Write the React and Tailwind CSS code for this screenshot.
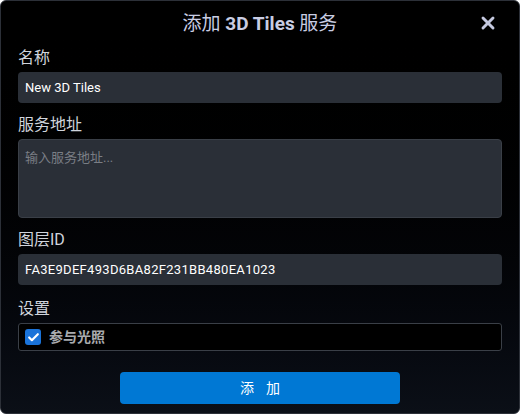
import { X, Check } from "lucide-react";

export default function App() {
  return (
    <div
      className="h-[414px] w-[520px] bg-white"
      style={{ fontFamily: 'Roboto, "Noto Sans CJK SC", sans-serif' }}
    >
      <div className="flex h-full flex-col rounded-md border border-[#2c3038] bg-gradient-to-b from-[#000000] to-[#0b0f17] px-[17px]">
        <div className="relative flex h-[46px] items-center justify-center">
          <h1 className="text-[19px] text-[#c9cde3]">
            添加 <span className="font-bold">3D Tiles</span> 服务
          </h1>
          <button className="absolute right-[4px] top-[12px] text-[#c5c9e0]">
            <X size={20} strokeWidth={3.5} />
          </button>
        </div>

        <Label>名称</Label>
        <input
          defaultValue="New 3D Tiles"
          className="h-[31px] w-full rounded-[4px] bg-[#2a2f37] px-[7px] text-[13px] text-white outline-none"
        />

        <Label className="mt-[11px]">服务地址</Label>
        <textarea
          placeholder="输入服务地址..."
          className="h-[79px] w-full resize-none rounded-[4px] border border-[#3a3f47] bg-[#2a2f37] px-[6px] pt-[8px] text-[13px] text-white outline-none placeholder:text-[#7a7e85]"
        />

        <Label className="mt-[11px]">图层ID</Label>
        <input
          defaultValue="FA3E9DEF493D6BA82F231BB480EA1023"
          className="h-[31px] w-full rounded-[4px] bg-[#2a2f37] px-[7px] text-[13px] tracking-[0.3px] text-white outline-none"
        />

        <Label className="mt-[13px]">设置</Label>
        <div className="flex h-[28px] items-center gap-[8px] rounded-[3px] border border-[#3a3f47] bg-black px-[6px]">
          <span className="flex h-[16px] w-[16px] items-center justify-center rounded-[3px] bg-[#1a73d9]">
            <Check size={13} strokeWidth={4} className="text-white" />
          </span>
          <span className="text-[14px] font-bold text-[#a9abae]">参与光照</span>
        </div>

        <div className="mt-[21px] flex justify-center">
          <button className="flex h-[32px] w-[280px] items-center justify-center gap-[12px] rounded-[4px] bg-[#0078d4] text-[14px] text-white">
            <span>添</span>
            <span>加</span>
          </button>
        </div>
      </div>
    </div>
  );
}

function Label({ children, className = "" }) {
  return (
    <div className={`mb-[3px] text-[16px] leading-[22px] text-[#d0d4dc] ${className}`}>
      {children}
    </div>
  );
}
